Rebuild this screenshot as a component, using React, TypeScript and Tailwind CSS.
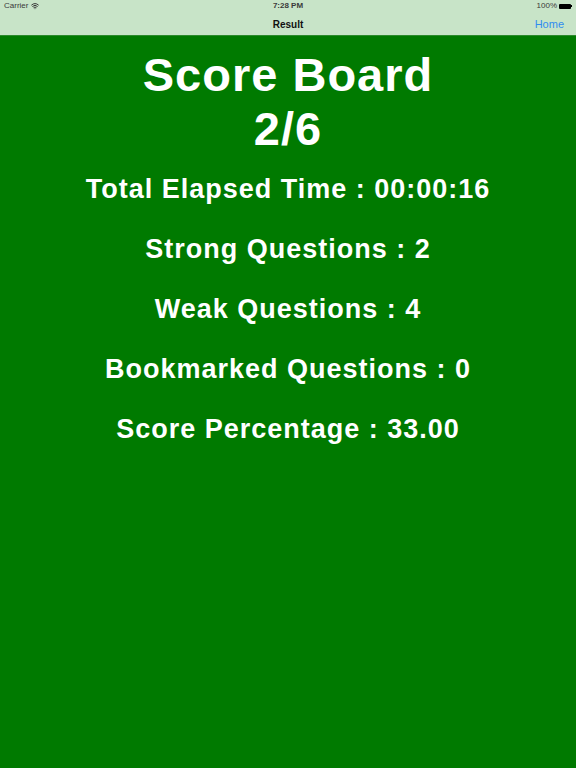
import { Wifi } from 'lucide-react';

const stats = [
  'Total Elapsed Time : 00:00:16',
  'Strong Questions : 2',
  'Weak Questions : 4',
  'Bookmarked Questions : 0',
  'Score Percentage : 33.00',
];

export default function App() {
  return (
    <div className="flex h-[768px] w-[576px] flex-col bg-[#007a00] font-['Liberation_Sans',sans-serif]">
      {/* Status + nav bar */}
      <div className="h-[36px] border-b border-[#2c8a2c] bg-[#c8e4c8]">
        <div className="flex h-[12px] items-center justify-between px-[4px] text-[8px] text-[#3a3a3a]">
          <div className="flex items-center gap-[3px]">
            <span>Carrier</span>
            <Wifi className="h-[8px] w-[8px]" strokeWidth={3} />
          </div>
          <span className="font-semibold">7:28 PM</span>
          <div className="flex items-center gap-[2px]">
            <span>100%</span>
            <div className="flex items-center">
              <div className="h-[5px] w-[12px] rounded-[1px] bg-black" />
              <div className="h-[2px] w-[1px] bg-black" />
            </div>
          </div>
        </div>
        <div className="relative flex h-[24px] items-center justify-center">
          <span className="text-[10px] font-semibold text-[#111]">Result</span>
          <span className="absolute right-[12px] text-[11px] text-[#2f8cf0]">Home</span>
        </div>
      </div>

      {/* Content */}
      <div className="flex flex-col items-center pt-[12px] text-white">
        <h1 className="text-center text-[47px] font-bold leading-[54px] tracking-[1px]">
          Score Board
          <br />
          2/6
        </h1>
        <div className="mt-[3px] flex flex-col items-center">
          {stats.map((s) => (
            <p key={s} className="h-[60px] text-[27px] font-bold leading-[60px] tracking-[1px]">
              {s}
            </p>
          ))}
        </div>
      </div>
    </div>
  );
}
